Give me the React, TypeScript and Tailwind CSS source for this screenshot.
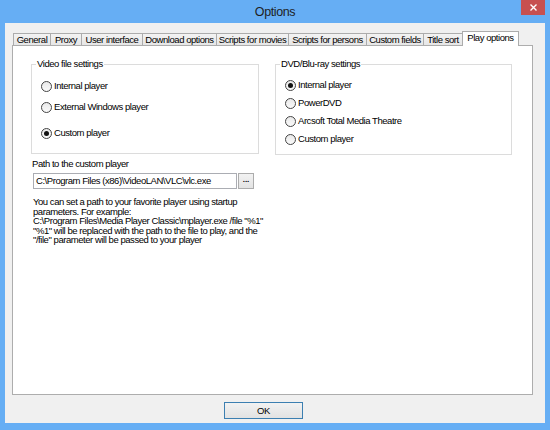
import React from "react";

const tabs = [
  { label: "General", w: "w-[38px]" },
  { label: "Proxy", w: "w-[32px]" },
  { label: "User interface", w: "w-[62px]" },
  { label: "Download options", w: "w-[75px]" },
  { label: "Scripts for movies", w: "w-[73px]" },
  { label: "Scripts for persons", w: "w-[79px]" },
  { label: "Custom fields", w: "w-[58px]" },
  { label: "Title sort", w: "w-[40px]" },
];

function Radio({ label, checked }: { label: string; checked?: boolean }) {
  return (
    <div className="flex items-center h-[14px] gap-[2px]">
      <span className="w-[11px] h-[11px] rounded-full border border-[#444] bg-gradient-to-b from-[#e9e9e9] to-[#fafafa] flex items-center justify-center">
        {checked && <span className="w-[5px] h-[5px] rounded-full bg-[#111]" />}
      </span>
      <span className="whitespace-nowrap">{label}</span>
    </div>
  );
}

function GroupBox({
  title,
  className,
  children,
}: {
  title: string;
  className: string;
  children: React.ReactNode;
}) {
  return (
    <div className={"relative border border-[#dcdcdc] " + className}>
      {/* caption sits over the top border */}
      <span className="absolute left-[4px] -top-[6px] bg-white px-[1px] leading-[10px] whitespace-nowrap">
        {title}
      </span>
      {children}
    </div>
  );
}

const helpLines = [
  "You can set a path to your favorite player using startup",
  "parameters. For example:",
  'C:\\Program Files\\Media Player Classic\\mplayer.exe /file "%1"',
  '"%1" will be replaced with the path to the file to play, and the',
  '"/file" parameter will be passed to your player',
];

export default function App() {
  return (
    <div
      className="w-[550px] h-[430px] bg-[#66aef4] flex flex-col text-[9.5px] tracking-[-0.45px] text-black"
      style={{ fontFamily: '"Liberation Sans", Arial, sans-serif' }}
    >
      {/* Title bar */}
      <div className="relative h-[23px] flex items-center justify-center">
        <span className="text-[12.5px] tracking-[-0.4px] text-[#1e1e1e] pt-[1px]">Options</span>
        <div className="absolute right-[5px] top-0 w-[24px] h-[15px] bg-[#c75050] flex items-center justify-center">
          <svg width="7" height="7" viewBox="0 0 7 7">
            <path d="M0.5 0.5L6.5 6.5M6.5 0.5L0.5 6.5" stroke="#fff" strokeWidth="1.4" />
          </svg>
        </div>
      </div>

      {/* Client area */}
      <div className="mx-[5px] h-[400px] bg-[#f0f0f0] flex flex-col">
        {/* Tabs */}
        <div className="mt-[8px] ml-[8px] flex items-end h-[15px] -mb-px relative z-10">
          {tabs.map((t) => (
            <div
              key={t.label}
              className={
                "h-[13px] border border-[#acacac] -ml-px first:ml-0 bg-gradient-to-b from-[#f3f3f3] to-[#e6e6e6] flex items-center justify-center whitespace-nowrap leading-[10px] " +
                t.w
              }
            >
              {t.label}
            </div>
          ))}
          <div className="h-[15px] w-[57px] border border-b-0 border-[#acacac] -ml-px bg-white flex justify-center pt-[1px] leading-[10px] whitespace-nowrap">
            Play options
          </div>
        </div>

        {/* Tab page */}
        <div className="ml-[7px] w-[521px] h-[350px] bg-white border border-[#adadad]">
          <div className="flex items-start pt-[18px] pl-[18px]">
            <GroupBox title="Video file settings" className="w-[228px] h-[90px] pt-[14px] pl-[9px]">
              <Radio label="Internal player" />
              <div className="mt-[7px]">
                <Radio label="External Windows player" />
              </div>
              <div className="mt-[12px]">
                <Radio label="Custom player" checked />
              </div>
            </GroupBox>
            <GroupBox title="DVD/Blu-ray settings" className="ml-[16px] w-[237px] h-[91px] pt-[13px] pl-[9px]">
              <div className="flex flex-col gap-[4px]">
                <Radio label="Internal player" checked />
                <Radio label="PowerDVD" />
                <Radio label="Arcsoft Total Media Theatre" />
                <Radio label="Custom player" />
              </div>
            </GroupBox>
          </div>

          <div className="pl-[20px]">
            <div className="mt-[4px] leading-[10px] -ml-px">Path to the custom player</div>
            <div className="mt-[4px] flex">
              <div className="w-[204px] h-[16px] border border-[#abadb3] bg-white flex items-center pl-[2px] whitespace-nowrap">
                {"C:\\Program Files (x86)\\VideoLAN\\VLC\\vlc.exe"}
              </div>
              <div className="ml-px w-[16px] h-[16px] border border-[#acacac] bg-gradient-to-b from-[#f2f2f2] to-[#e3e3e3] flex items-center justify-center text-[8px] font-bold tracking-normal pb-[2px]">
                ...
              </div>
            </div>
            <div className="mt-[8px] leading-[9.6px]">
              {helpLines.map((l) => (
                <div key={l} className="whitespace-nowrap">
                  {l}
                </div>
              ))}
            </div>
          </div>
        </div>

        {/* Footer */}
        <div className="mt-[7px] ml-[219px] w-[79px] h-[17px] border border-[#3c7fb1] bg-gradient-to-b from-[#f2f2f2] to-[#e2e2e2] flex items-center justify-center">
          <span className="leading-[10px]">OK</span>
        </div>
      </div>
    </div>
  );
}
